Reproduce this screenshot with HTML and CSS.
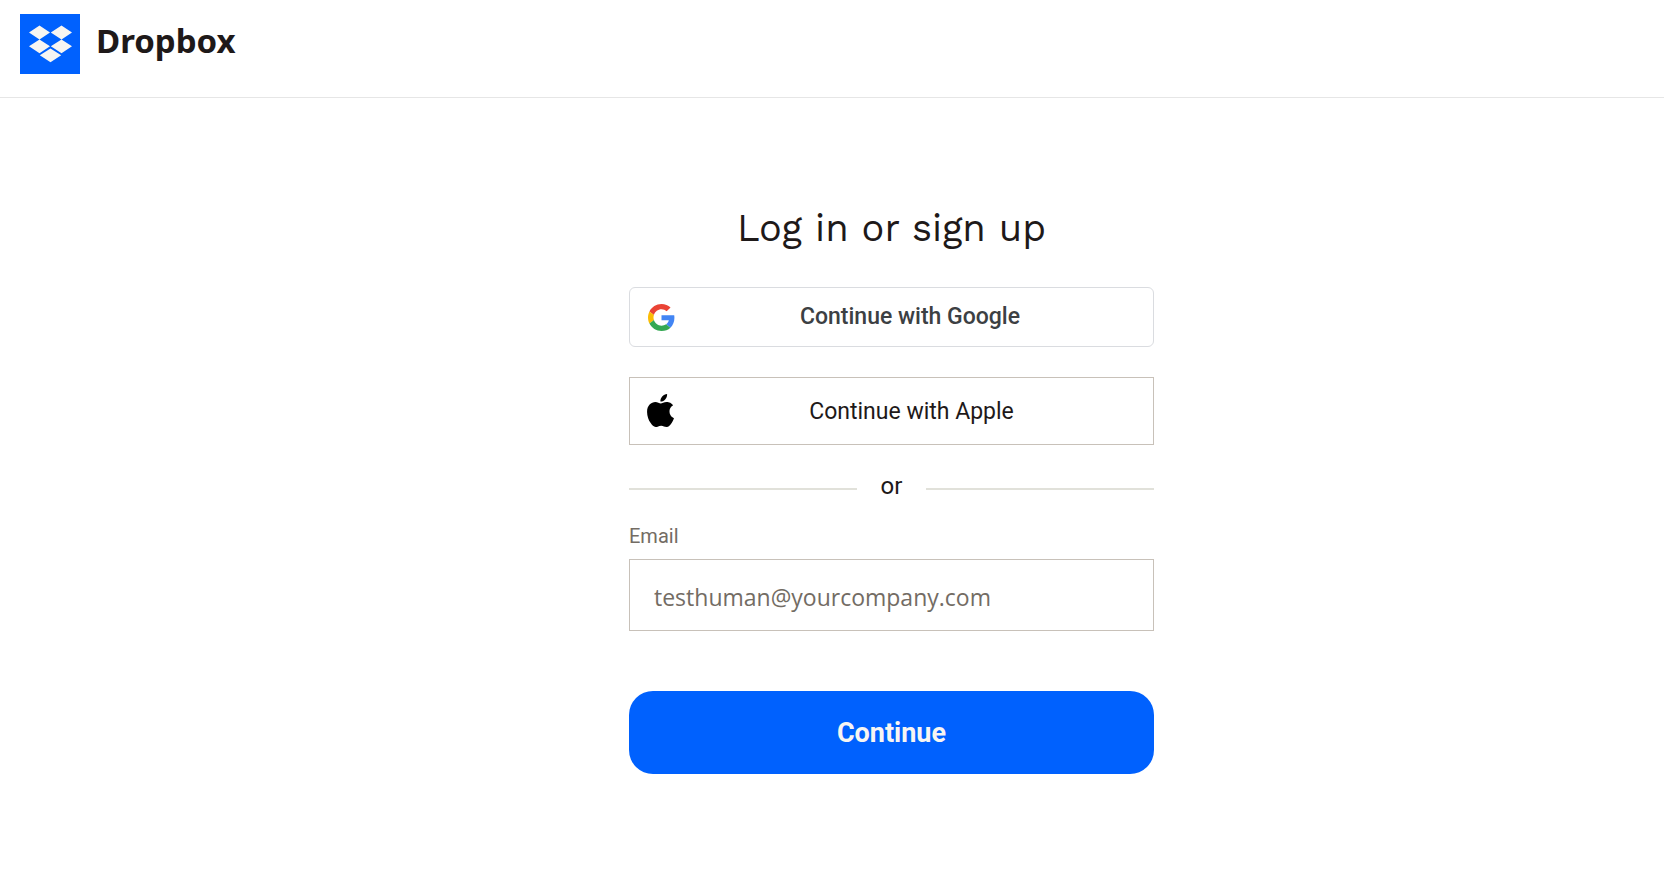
FILE: index.html
```html
<!DOCTYPE html>
<html lang="en">
<head>
<meta charset="utf-8">
<meta name="viewport" content="width=device-width, initial-scale=1">
<title>Log in or sign up - Dropbox</title>
<link rel="stylesheet" href="styles.css">
</head>
<body>
<header class="header">
  <a class="brand" href="#">
    <svg class="brand-mark" viewBox="0 0 60 60" aria-hidden="true">
      <path fill="#0061fe" d="M0 0h60v60H0z"/>
      <path fill="#f7f5f2" d="M19.500 11.500 30 18.500l-10.500 7L9 18.500zM41.500 11.500 52 18.500l-10.500 7L30.800 18.500zM19.500 25.500 30 32.300l-10.500 7L9 32.300zM41.500 25.500 52 32.300l-10.500 7L30.800 32.300zM30.500 34.500l10.700 6.800-10.700 7-10.700-7z"/>
    </svg>
    <span class="brand-name">Dropbox</span>
  </a>
</header>
<main class="main">
  <form class="login">
    <h1 class="title">Log in or sign up</h1>
    <button class="provider google" type="button">
      <svg class="google-icon" viewBox="0 0 48 48" aria-hidden="true">
        <path fill="#ea4335" d="M24 9.500c3.540 0 6.710 1.220 9.210 3.600l6.850-6.850C35.900 2.380 30.470 0 24 0 14.620 0 6.510 5.380 2.560 13.220l7.980 6.190C12.430 13.720 17.740 9.500 24 9.500z"/>
        <path fill="#4285f4" d="M46.980 24.550c0-1.570-.15-3.090-.38-4.550H24v9.020h12.940c-.58 2.960-2.260 5.480-4.780 7.180l7.730 6c4.510-4.180 7.090-10.360 7.090-17.650z"/>
        <path fill="#fbbc05" d="M10.530 28.590c-.48-1.450-.76-2.990-.76-4.590s.27-3.140.76-4.590l-7.980-6.190C.92 16.460 0 20.120 0 24c0 3.880.92 7.540 2.560 10.780z"/>
        <path fill="#34a853" d="M24 48c6.480 0 11.930-2.130 15.890-5.810l-7.730-6c-2.150 1.450-4.920 2.300-8.160 2.300-6.260 0-11.570-4.220-13.470-9.910l-7.980 6.190C6.510 42.620 14.620 48 24 48z"/>
      </svg>
      <span class="provider-text">Continue with Google</span>
    </button>
    <button class="provider apple" type="button">
      <svg class="apple-icon" viewBox="0 0 814 1000" aria-hidden="true">
        <path d="M788.100 340.900c-5.800 4.500-108.200 62.200-108.200 190.500 0 148.400 130.300 200.900 134.200 202.200-.6 3.200-20.700 71.900-68.700 141.900-42.800 61.600-87.500 123.100-155.500 123.100s-85.500-39.500-164-39.500c-76.500 0-103.700 40.800-165.900 40.800s-105.600-57-155.500-127C46.700 790.700 0 663 0 541.800c0-194.400 126.400-297.500 250.800-297.500 66.100 0 121.200 43.400 162.700 43.400 39.500 0 101.100-46 176.300-46 28.500 0 130.900 2.600 198.300 99.200zm-234-181.500c31.100-36.900 53.100-88.100 53.100-139.300 0-7.100-.6-14.300-1.900-20.100-50.600 1.900-110.800 33.700-147.100 75.800-28.500 32.400-55.100 83.600-55.100 135.500 0 7.800 1.300 15.600 1.900 18.100 3.200.6 8.400 1.300 13.600 1.300 45.400 0 102.500-30.400 135.500-71.300z"/>
      </svg>
      <span class="provider-text">Continue with Apple</span>
    </button>
    <div class="divider">or</div>
    <label class="label" for="email">Email</label>
    <input class="email" id="email" type="email" placeholder="testhuman@yourcompany.com">
    <button class="submit" type="submit">Continue</button>
  </form>
</main>
</body>
</html>
```

FILE: styles.css
```css
* {
  box-sizing: border-box;
}

body {
  margin: 0;
  background: #fff;
  color: #1e1919;
  font-family: Roboto, "Liberation Sans", sans-serif;
}

.header {
  padding: 14px 20px 23px;
  border-bottom: 1px solid #e6e6e6;
}

.brand {
  display: flex;
  width: fit-content;
  gap: 16px;
  color: #1e1919;
  text-decoration: none;
}

.brand-mark {
  width: 60px;
  height: 60px;
}

.brand-name {
  font: 700 33px/54px "Noto Sans", sans-serif;
}

.main {
  display: flex;
  justify-content: center;
  padding: 104px 0 64px 119px;
}

.login {
  display: flex;
  flex-direction: column;
  width: 100%;
  max-width: 525px;
}

.title {
  margin: 0 0 32px;
  font: 400 38px/53px "Work Sans", "Open Sans", sans-serif;
  text-align: center;
}

.provider {
  display: flex;
  align-items: center;
  background: #fff;
  font-family: Roboto, sans-serif;
  font-size: 23px;
  line-height: 28px;
  cursor: pointer;
}

.provider-text {
  flex: 1;
  text-align: center;
}

.google {
  min-height: 60px;
  margin-bottom: 30px;
  padding: 0 8px 0 18px;
  border: 1px solid #dadce0;
  border-radius: 6px;
  color: #3c4043;
  font-weight: 500;
}

.google-icon {
  width: 27px;
  height: 27px;
}

.apple {
  min-height: 68px;
  padding: 0 4px 2px 17px;
  border: 1px solid #c8c1b9;
  color: #1e1919;
}

.apple .provider-text {
  padding-top: 4px;
}

.apple-icon {
  width: 27px;
  height: 33px;
}

.divider {
  display: flex;
  align-items: center;
  gap: 24px;
  margin: 25px 0 22px;
  font-size: 24px;
  line-height: 32px;
}

.divider::before,
.divider::after {
  content: "";
  flex: 1;
  height: 2px;
  margin-top: 6px;
  background: #e1e1da;
}

.label {
  margin-bottom: 11px;
  color: #736c64;
  font-size: 20px;
  line-height: 24px;
}

.email {
  width: 100%;
  padding: 20px 24px 16px;
  border: 1px solid #c8c1b9;
  border-radius: 0;
  color: #1e1919;
  font: 400 23px/34px "Open Sans", sans-serif;
}

.email::placeholder {
  color: #736c64;
}

.submit {
  min-height: 83px;
  margin-top: 60px;
  border: 0;
  border-radius: 24px;
  background: #0061fe;
  color: #f7f5f2;
  font: 700 27px/32px Roboto, sans-serif;
  cursor: pointer;
}
```
